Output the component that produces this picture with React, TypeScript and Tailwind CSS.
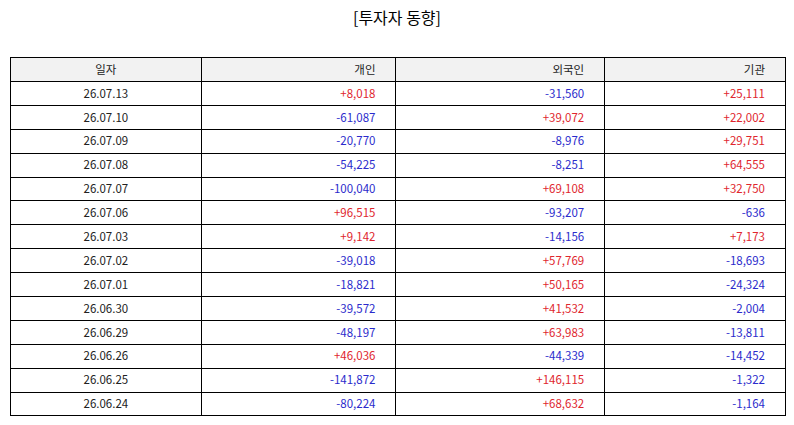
const rows: [string, string, string, string][] = [
  ["26.07.13", "+8,018", "-31,560", "+25,111"],
  ["26.07.10", "-61,087", "+39,072", "+22,002"],
  ["26.07.09", "-20,770", "-8,976", "+29,751"],
  ["26.07.08", "-54,225", "-8,251", "+64,555"],
  ["26.07.07", "-100,040", "+69,108", "+32,750"],
  ["26.07.06", "+96,515", "-93,207", "-636"],
  ["26.07.03", "+9,142", "-14,156", "+7,173"],
  ["26.07.02", "-39,018", "+57,769", "-18,693"],
  ["26.07.01", "-18,821", "+50,165", "-24,324"],
  ["26.06.30", "-39,572", "+41,532", "-2,004"],
  ["26.06.29", "-48,197", "+63,983", "-13,811"],
  ["26.06.26", "+46,036", "-44,339", "-14,452"],
  ["26.06.25", "-141,872", "+146,115", "-1,322"],
  ["26.06.24", "-80,224", "+68,632", "-1,164"],
];

// cell border shared by header and body
const cell = "border-[1.5px] border-black";

function Num({ v }: { v: string }) {
  return (
    <td
      className={`${cell} pr-[20px] text-right ${
        v.startsWith("+") ? "text-[#e0262e]" : "text-[#2b2bcc]"
      }`}>
      {v}
    </td>
  );
}

export default function App() {
  return (
    <div
      className="w-[794px] h-[425px] bg-white text-[#222]"
      style={{ fontFamily: '"Noto Sans CJK KR", "Noto Sans", sans-serif' }}>
      <h1 className="pt-[3px] h-[57px] text-center text-[16px] leading-[28px] text-black">
        [투자자 동향]
      </h1>
      <table className="ml-[10px] w-[776px] border-collapse text-[11.5px] leading-none">
        <colgroup>
          <col className="w-[191px]" />
          <col className="w-[195px]" />
          <col className="w-[209px]" />
          <col className="w-[181px]" />
        </colgroup>
        <thead>
          <tr className="h-[24px] bg-[#f2f2f2]">
            <th className={`${cell} font-normal text-center`}>일자</th>
            <th className={`${cell} font-normal text-right pr-[20px]`}>개인</th>
            <th className={`${cell} font-normal text-right pr-[20px]`}>외국인</th>
            <th className={`${cell} font-normal text-right pr-[20px]`}>기관</th>
          </tr>
        </thead>
        <tbody>
          {rows.map((r) => (
            <tr key={r[0]} className="h-[23.9px]">
              <td className={`${cell} text-center`}>{r[0]}</td>
              <Num v={r[1]} />
              <Num v={r[2]} />
              <Num v={r[3]} />
            </tr>
          ))}
        </tbody>
      </table>
    </div>
  );
}
